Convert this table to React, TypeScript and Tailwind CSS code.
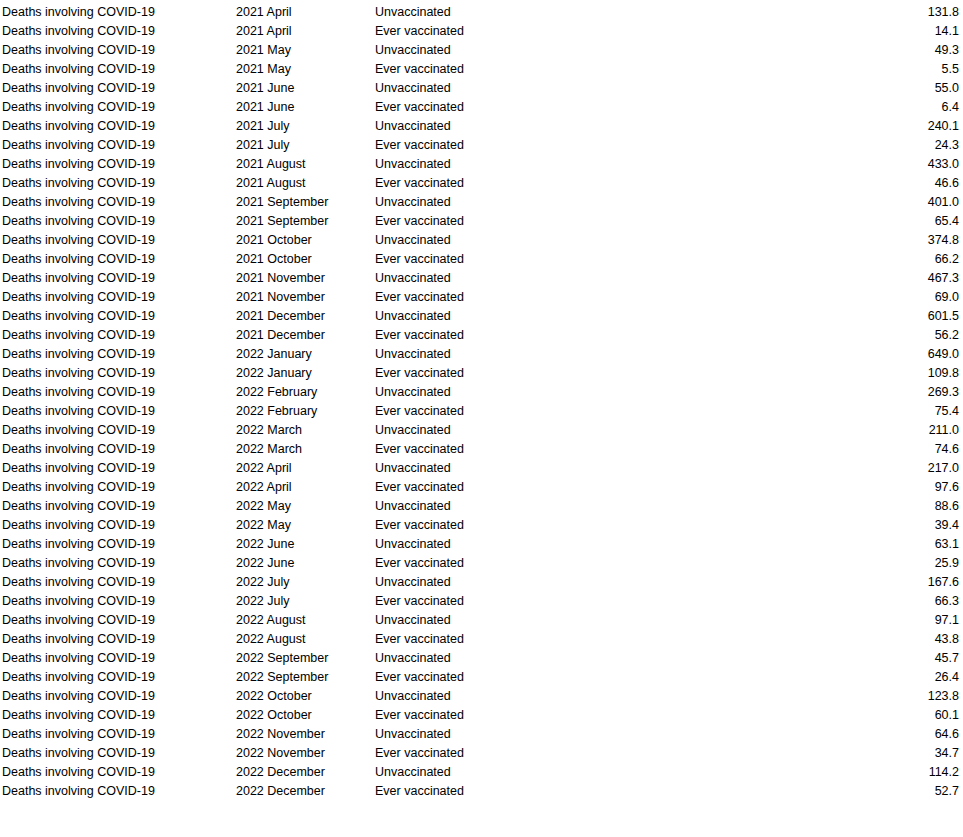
import React from 'react';

const rows: [string, string, string][] = [
  ['2021 April', 'Unvaccinated', '131.8'],
  ['2021 April', 'Ever vaccinated', '14.1'],
  ['2021 May', 'Unvaccinated', '49.3'],
  ['2021 May', 'Ever vaccinated', '5.5'],
  ['2021 June', 'Unvaccinated', '55.0'],
  ['2021 June', 'Ever vaccinated', '6.4'],
  ['2021 July', 'Unvaccinated', '240.1'],
  ['2021 July', 'Ever vaccinated', '24.3'],
  ['2021 August', 'Unvaccinated', '433.0'],
  ['2021 August', 'Ever vaccinated', '46.6'],
  ['2021 September', 'Unvaccinated', '401.0'],
  ['2021 September', 'Ever vaccinated', '65.4'],
  ['2021 October', 'Unvaccinated', '374.8'],
  ['2021 October', 'Ever vaccinated', '66.2'],
  ['2021 November', 'Unvaccinated', '467.3'],
  ['2021 November', 'Ever vaccinated', '69.0'],
  ['2021 December', 'Unvaccinated', '601.5'],
  ['2021 December', 'Ever vaccinated', '56.2'],
  ['2022 January', 'Unvaccinated', '649.0'],
  ['2022 January', 'Ever vaccinated', '109.8'],
  ['2022 February', 'Unvaccinated', '269.3'],
  ['2022 February', 'Ever vaccinated', '75.4'],
  ['2022 March', 'Unvaccinated', '211.0'],
  ['2022 March', 'Ever vaccinated', '74.6'],
  ['2022 April', 'Unvaccinated', '217.0'],
  ['2022 April', 'Ever vaccinated', '97.6'],
  ['2022 May', 'Unvaccinated', '88.6'],
  ['2022 May', 'Ever vaccinated', '39.4'],
  ['2022 June', 'Unvaccinated', '63.1'],
  ['2022 June', 'Ever vaccinated', '25.9'],
  ['2022 July', 'Unvaccinated', '167.6'],
  ['2022 July', 'Ever vaccinated', '66.3'],
  ['2022 August', 'Unvaccinated', '97.1'],
  ['2022 August', 'Ever vaccinated', '43.8'],
  ['2022 September', 'Unvaccinated', '45.7'],
  ['2022 September', 'Ever vaccinated', '26.4'],
  ['2022 October', 'Unvaccinated', '123.8'],
  ['2022 October', 'Ever vaccinated', '60.1'],
  ['2022 November', 'Unvaccinated', '64.6'],
  ['2022 November', 'Ever vaccinated', '34.7'],
  ['2022 December', 'Unvaccinated', '114.2'],
  ['2022 December', 'Ever vaccinated', '52.7'],
];

export default function App() {
  return (
    <div className="bg-white text-black min-h-screen w-[963px] pt-[3px] pl-[2px] pr-[4px] font-['Liberation_Sans',Arial,sans-serif] text-[12.5px] leading-[19px]">
      {rows.map(([month, status, value], i) => (
        <div key={i} className="flex h-[19px] whitespace-nowrap">
          <div className="w-[234px]">Deaths involving COVID-19</div>
          <div className="w-[139px]">{month}</div>
          <div className="flex-1">{status}</div>
          <div className="text-right">{value}</div>
        </div>
      ))}
    </div>
  );
}
